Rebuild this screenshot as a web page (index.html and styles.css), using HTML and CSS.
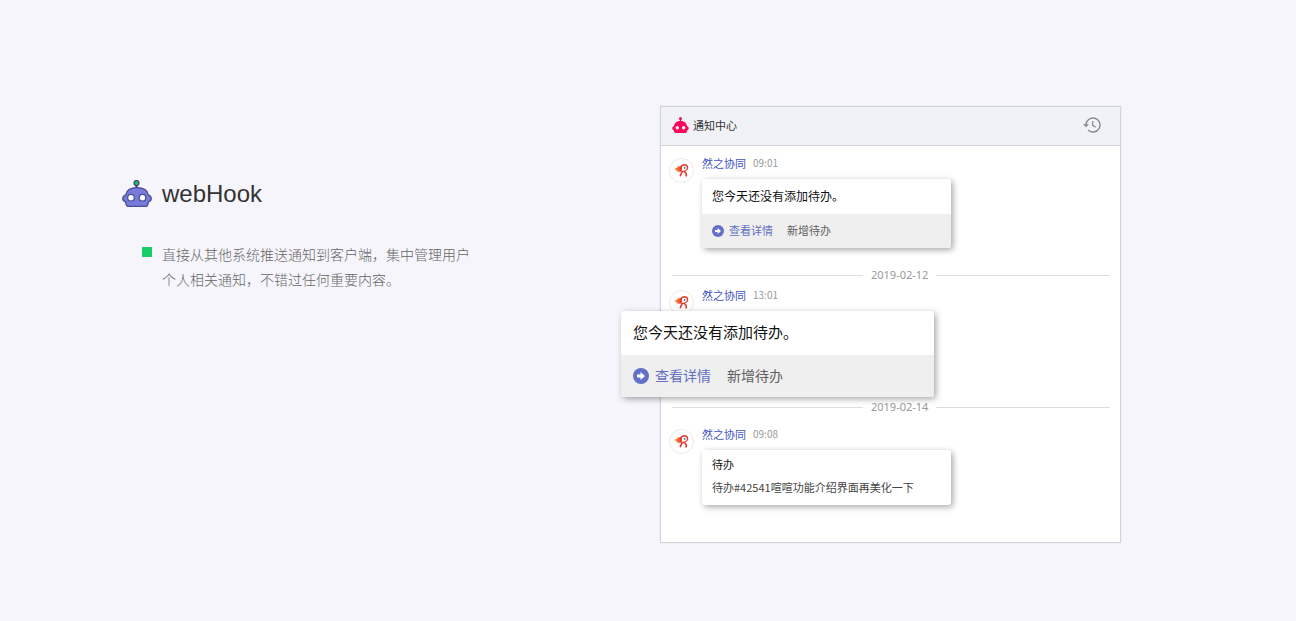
FILE: index.html
```html
<!DOCTYPE html>
<html lang="zh-CN">
<head>
<meta charset="utf-8">
<meta name="viewport" content="width=device-width, initial-scale=1">
<title>webHook</title>
<link rel="stylesheet" href="styles.css">
</head>
<body>
<svg class="defs" aria-hidden="true">
  <defs>
    <linearGradient id="flame" x1="0" x2="1" y1="0" y2="0">
      <stop offset="0" stop-color="#f5923e"/>
      <stop offset="1" stop-color="#e8432f"/>
    </linearGradient>
    <symbol id="bird" viewBox="0 0 18 16">
      <path d="M.5 7.200 3.500 6.600 1.300 5.600 5 5.200 3.500 3.900C6.500 3.800 7.500 3 10 2L9 9C7.500 10 5.500 8.800 3.500 9.200L5 8.300 2.500 8.200 4 7.400Z" fill="url(#flame)"/>
      <path d="M8.600 8C7.300 4 9.500 2 12.200 2 15.200 2 16.300 4.500 14.700 6.800 13.500 8.400 11.500 9.300 9.700 9L7.500 14.200M12.300 9.300 14 11.300V14.400" fill="none" stroke="#e8382f" stroke-width="1.700"/>
      <circle cx="12" cy="5.400" r="2.500" fill="#fff"/>
      <circle cx="12.300" cy="5.200" r=".9" fill="#4a6078"/>
    </symbol>
    <symbol id="arrow" viewBox="0 0 16 16">
      <circle cx="8" cy="8" r="8" fill="#6370c4"/>
      <path d="M4 6.600H7.500V4L12 8 7.500 12V9.400H4Z" fill="#fff"/>
    </symbol>
  </defs>
</svg>
<main class="feature">
  <section class="intro">
    <h1 class="intro-title">
      <svg class="intro-icon" viewBox="0 0 30 28" aria-hidden="true">
        <path d="M14.500 4V9" stroke="#3e4172" stroke-width="2.200"/>
        <circle cx="14.500" cy="3" r="2.500" fill="#20bd68" stroke="#3e4172" stroke-width="1.200"/>
        <path d="M3.800 14.800C4.500 10 8.500 7.600 15 7.600S25.500 10 26.200 14.800C28.200 15.500 29.200 16.700 29.200 18.500S28.200 21.300 26.500 21.800C26.200 24 25 26.400 23 26.400H7C5 26.400 3.800 24 3.500 21.800 1.800 21.300 .8 20.300 .8 18.500S1.800 15.500 3.800 14.800Z" fill="#777bdc" stroke="#4c4f92" stroke-width="1.400"/>
        <circle cx="9" cy="17.700" r="3.300" fill="#fff" stroke="#4c4f92" stroke-width="1.200"/>
        <circle cx="20.500" cy="17.700" r="3.300" fill="#fff" stroke="#4c4f92" stroke-width="1.200"/>
      </svg>
      webHook
    </h1>
    <ul class="points">
      <li class="point">直接从其他系统推送通知到客户端，集中管理用户个人相关通知，不错过任何重要内容。</li>
    </ul>
  </section>

  <section class="panel" aria-labelledby="panel-title">
    <header class="panel-head">
      <svg class="panel-icon" viewBox="0 0 17 16" aria-hidden="true">
        <path d="M8.500 2V6" stroke="#fb0a5c" stroke-width="1.200"/>
        <circle cx="8.500" cy="1.600" r="1.500" fill="#fb0a5c"/>
        <path fill-rule="evenodd" d="M2 9C2.500 6 4.500 4 8.500 4S14.500 6 15 9C17.300 9.800 17.300 12.500 15.300 13.300 15 15.300 14.300 16 13.300 16H3.700C2.700 16 2 15.300 1.700 13.300-.3 12.500-.3 9.800 2 9ZM5.300 9A1.700 1.700 0 1 0 5.300 12.400 1.700 1.700 0 1 0 5.300 9ZM11.700 9A1.700 1.700 0 1 0 11.700 12.400 1.700 1.700 0 1 0 11.700 9Z" fill="#fb0a5c"/>
      </svg>
      <h2 class="panel-title" id="panel-title">通知中心</h2>
      <button class="history" type="button" aria-label="历史记录">
        <svg viewBox="0 0 18 16" width="18" height="16" aria-hidden="true">
          <path d="M3 8A7 7 0 1 1 5 12.900" fill="none" stroke="#8b8c90" stroke-width="1.400"/>
          <path d="M0 7.300H6L3 10.300Z" fill="#8b8c90"/>
          <path d="M9.700 4V8.400L12.800 10.300" fill="none" stroke="#8b8c90" stroke-width="1.300"/>
        </svg>
      </button>
    </header>
    <div class="feed">
      <article class="message">
        <span class="avatar"><svg class="bird"><use href="#bird"/></svg></span>
        <div class="message-body">
          <div class="meta"><a class="name" href="#">然之协同</a><time class="time">09:01</time></div>
          <div class="card">
            <p class="card-text">您今天还没有添加待办。</p>
            <div class="actions">
              <a class="action action-main" href="#"><svg class="arrow"><use href="#arrow"/></svg>查看详情</a>
              <a class="action" href="#">新增待办</a>
            </div>
          </div>
        </div>
      </article>
      <div class="divider"><span>2019-02-12</span></div>
      <article class="message message-focus">
        <span class="avatar"><svg class="bird"><use href="#bird"/></svg></span>
        <div class="message-body">
          <div class="meta"><a class="name" href="#">然之协同</a><time class="time">13:01</time></div>
        </div>
        <div class="card card-large">
          <p class="card-text">您今天还没有添加待办。</p>
          <div class="actions">
            <a class="action action-main" href="#"><svg class="arrow"><use href="#arrow"/></svg>查看详情</a>
            <a class="action" href="#">新增待办</a>
          </div>
        </div>
      </article>
      <div class="divider"><span>2019-02-14</span></div>
      <article class="message message-last">
        <span class="avatar"><svg class="bird"><use href="#bird"/></svg></span>
        <div class="message-body">
          <div class="meta"><a class="name" href="#">然之协同</a><time class="time">09:08</time></div>
          <div class="card card-note">
            <h3 class="note-title">待办</h3>
            <p class="note-text">待办#42541喧喧功能介绍界面再美化一下</p>
          </div>
        </div>
      </article>
    </div>
  </section>
</main>
</body>
</html>
```
FILE: styles.css
```css
* { box-sizing: border-box; }
body {
  margin: 0;
  background: #f6f5fb;
  font-family: "Liberation Sans", "Noto Sans CJK SC", sans-serif;
  color: #333;
}
h1, h2, h3, p, ul { margin: 0; padding: 0; font-weight: 400; }
a { text-decoration: none; color: inherit; }
.defs { position: absolute; width: 0; height: 0; }

.feature {
  display: grid;
  grid-template-columns: minmax(0, 1fr) 461px;
  min-height: 100vh;
  align-items: start;
  padding: 106px 175px 78px 122px;
}
.intro { padding-top: 72px; }
.intro-title {
  display: flex;
  align-items: center;
  gap: 10px;
  font-size: 24px;
  line-height: 32px;
}
.intro-icon { width: 30px; height: 28px; }
.points { list-style: none; padding: 33px 0 0 20px; max-width: 352px; }
.point {
  display: grid;
  grid-template-columns: 10px 1fr;
  gap: 10px;
  font-size: 14px;
  font-weight: 300;
  line-height: 25px;
  color: #666;
}
.point::before {
  content: "";
  height: 10px;
  margin-top: 4px;
  background: #16cd68;
}

.panel {
  font-family: "Noto Sans CJK SC", sans-serif;
  background: #fff;
  border: 1px solid #d3d4d8;
  box-shadow: 0 0 1px #d3d4d8;
}
.panel-head {
  display: flex;
  align-items: center;
  gap: 4px;
  height: 39px;
  padding: 0 19px 2px 11px;
  background: #f1f2f7;
  border-bottom: 1px solid #d3d4d8;
}
.panel-icon { width: 17px; height: 16px; }
.panel-title { font-size: 11px; line-height: 16px; }
.history {
  display: flex;
  margin-left: auto;
  padding: 0;
  border: 0;
  background: none;
}
.feed { padding: 9px 10px 37px 8px; }
.message {
  display: grid;
  grid-template-columns: 25px 249px;
  gap: 8px;
  align-items: start;
}
.avatar {
  display: grid;
  place-items: center;
  height: 25px;
  margin-top: 3px;
  border: 1px solid #eaeaea;
  border-radius: 50%;
}
.bird { width: 17px; height: 15px; }
.meta {
  display: flex;
  align-items: center;
  gap: 7px;
  margin-bottom: 8px;
  font-size: 11px;
  line-height: 16px;
}
.name { color: #4454c0; }
.time { font-size: 10px; color: #999; }
.card {
  overflow: hidden;
  background: #fff;
  border-radius: 3px;
  box-shadow: 2px 2px 6px rgba(0, 0, 0, .35);
}
.card-text {
  padding: 0 10px 1px;
  font-size: 12px;
  line-height: 34px;
  color: #111;
}
.actions {
  display: flex;
  gap: 14px;
  padding: 0 10px 1px;
  background: #efefef;
  font-size: 11px;
  line-height: 33px;
}
.action { color: #606060; }
.action-main {
  display: flex;
  align-items: center;
  gap: 5px;
  color: #6370c4;
}
.arrow { width: 12px; height: 12px; }

.divider {
  display: flex;
  align-items: center;
  gap: 8px;
  margin: 19px 0 4px 3px;
  font: 11px/16px "Noto Sans", sans-serif;
  color: #999;
}
.divider::before, .divider::after {
  content: "";
  flex: 11;
  border-top: 1px solid #ddd;
}
.divider::after { flex: 10; }
.message-focus { position: relative; min-height: 93px; }
.card-large {
  position: absolute;
  top: 24px;
  left: -48px;
  width: 313px;
}
.card-large .card-text { padding: 0 12px 2px; font-size: 15px; line-height: 42px; }
.card-large .actions { padding: 0 12px 1px; gap: 16px; font-size: 14px; line-height: 41px; }
.card-large .action-main { gap: 6px; }
.card-large .arrow { width: 16px; height: 16px; }
.message-last { padding-top: 7px; }
.card-note { padding: 3px 10px 6px; line-height: 23px; }
.note-title { font-size: 11px; color: #111; }
.note-text { font-size: 11px; color: #444; }
```
